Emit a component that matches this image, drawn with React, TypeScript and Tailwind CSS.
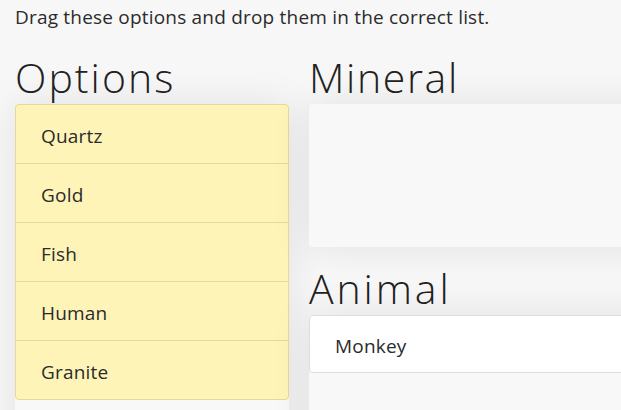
const options = ['Quartz', 'Gold', 'Fish', 'Human', 'Granite'];

const headingFont = { fontFamily: '"Open Sans", "Noto Sans", sans-serif' };

export default function App() {
  return (
    <div
      className="w-[621px] h-[410px] overflow-hidden bg-[#f7f7f7] px-[15px] pt-[4px] text-[#2b2b2b]"
      style={{ fontFamily: '"Open Sans", "Noto Sans", sans-serif' }}
    >
      <p className="text-[19px] leading-[27px] tracking-[0.2px] whitespace-nowrap">
        Drag these options and drop them in the correct list.
      </p>

      <div className="mt-[20px] grid grid-cols-[274px_600px] gap-x-[20px] items-start">
        {/* Options column */}
        <div>
          <h2 className="text-[41px] leading-[53px] tracking-[0.05em] font-light text-[#212121]" style={headingFont}>
            Options
          </h2>
          <div className="bg-[#f8f8f8] rounded shadow-[0_0_40px_rgba(0,0,0,0.09)] pb-[85px]">
            <ul className="rounded border border-[#e6d89a] bg-[#fff4b8] overflow-hidden">
              {options.map((o, i) => (
                <li
                  key={o}
                  className={`px-[25px] pt-[18px] pb-[14px] text-[19px] leading-[26px] tracking-[0.2px] ${
                    i > 0 ? 'border-t border-[#e6d89a]' : ''
                  }`}
                >
                  {o}
                </li>
              ))}
            </ul>
          </div>
        </div>

        {/* Target lists */}
        <div>
          <h2 className="text-[41px] leading-[53px] tracking-[0.04em] font-light text-[#212121]" style={headingFont}>
            Mineral
          </h2>
          <div className="h-[143px] bg-[#f8f8f8] rounded shadow-[0_0_40px_rgba(0,0,0,0.09)]" />

          <h2 className="mt-[15px] text-[41px] leading-[53px] tracking-[0.07em] font-light text-[#212121]" style={headingFont}>
            Animal
          </h2>
          <div className="bg-[#f8f8f8] rounded shadow-[0_0_40px_rgba(0,0,0,0.09)] pb-[85px]">
            <ul className="rounded border border-[#dedede] bg-white">
              <li className="px-[25px] pt-[17px] pb-[13px] text-[19px] leading-[26px] tracking-[0.2px]">Monkey</li>
            </ul>
          </div>
        </div>
      </div>
    </div>
  );
}
